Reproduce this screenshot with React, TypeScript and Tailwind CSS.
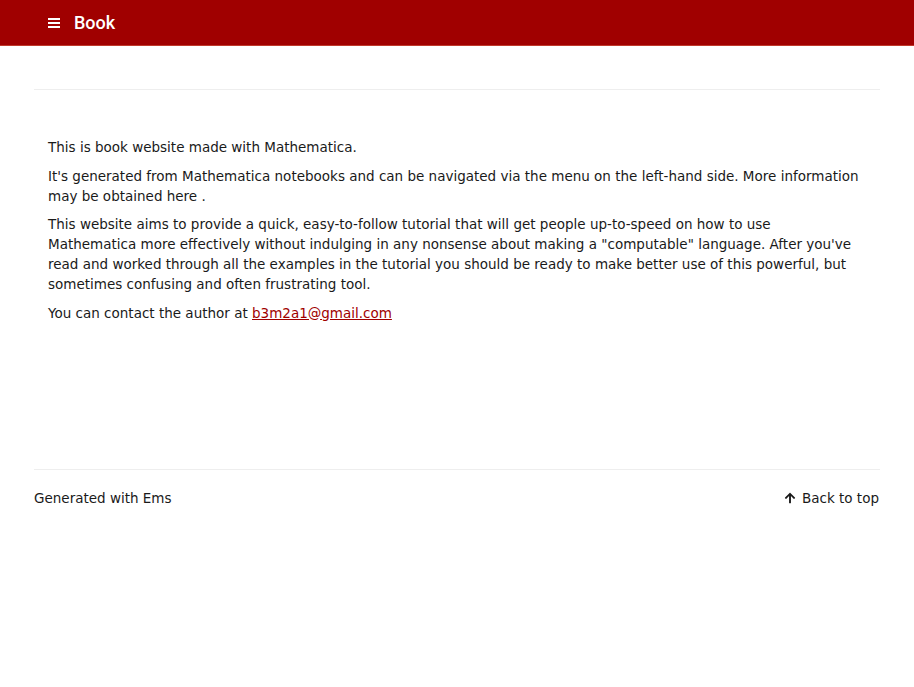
import { FaArrowUp } from "react-icons/fa";

export default function App() {
    return (
        <div className="min-h-screen bg-white text-[#1a1a1a]" style={{ fontFamily: '"DejaVu Sans", Verdana, sans-serif' }}>
            {/* Top bar */}
            <header className="h-[46px] bg-[#a00000] border-b border-[#c0392b] flex items-center pl-[48px]">
                <svg width="12" height="11" viewBox="0 0 12 11" className="mr-[14px]">
                    <rect x="0" y="1" width="12" height="2" fill="#fff" />
                    <rect x="0" y="5" width="12" height="2" fill="#fff" />
                    <rect x="0" y="9" width="12" height="2" fill="#fff" />
                </svg>
                <span className="text-white text-[18px] font-medium leading-none" style={{ fontFamily: 'Roboto, "Liberation Sans", sans-serif' }}>
                    Book
                </span>
            </header>

            <div className="mx-[34px]">
                <div className="h-[44px] border-b border-[#eeeeee]" />

                <main className="pl-[14px] pr-[18px] pt-[47px] pb-[146px] text-[13.5px] leading-[20px] space-y-[8.5px]">
                    <p>This is book website made with Mathematica.</p>
                    <p>
                        It's generated from Mathematica notebooks and can be navigated via the menu on the left-hand side. More information may be obtained here .
                    </p>
                    <p>
                        This website aims to provide a quick, easy-to-follow tutorial that will get people up-to-speed on how to use Mathematica more effectively without indulging in any nonsense about making a "computable" language. After you've read and worked through all the examples in the tutorial you should be ready to make better use of this powerful, but sometimes confusing and often frustrating tool.
                    </p>
                    <p>
                        You can contact the author at{" "}
                        <a href="#" className="text-[#a00000] underline">b3m2a1@gmail.com</a>
                    </p>
                </main>

                <footer className="border-t border-[#eeeeee] flex justify-between items-center pt-[18px] text-[13.5px] leading-[20px]">
                    <span>Generated with Ems</span>
                    <a href="#" className="flex items-center gap-[6px] mr-[1px]">
                        <FaArrowUp size={12} />
                        Back to top
                    </a>
                </footer>
            </div>
        </div>
    );
}
